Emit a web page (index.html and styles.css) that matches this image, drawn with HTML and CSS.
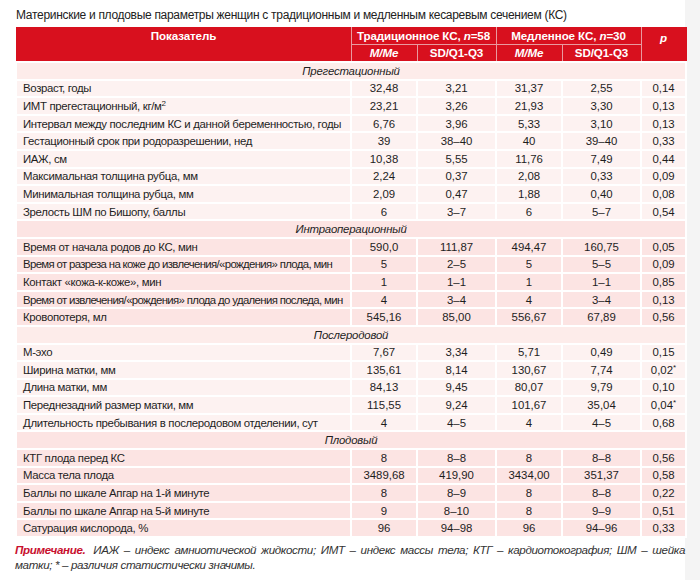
FILE: index.html
```html
<!DOCTYPE html>
<html lang="ru">
<head>
<meta charset="utf-8">
<title>Таблица</title>
<link rel="stylesheet" href="styles.css">
</head>
<body>
<div class="page">
  <div class="title">Материнские и плодовые параметры женщин с традиционным и медленным кесаревым сечением (КС)</div>
  <table class="tbl">
    <colgroup>
      <col class="c-name"><col class="c-m"><col class="c-sd"><col class="c-m"><col class="c-sd"><col class="c-p">
    </colgroup>
    <thead>
      <tr class="h1">
        <th rowspan="2" class="th-name">Показатель</th>
        <th colspan="2">Традиционное КС, <i>n</i>=58</th>
        <th colspan="2">Медленное КС, <i>n</i>=30</th>
        <th rowspan="2" class="th-p"><i>p</i></th>
      </tr>
      <tr class="h2">
        <th><i>M/Me</i></th><th>SD/Q1-Q3</th><th><i>M/Me</i></th><th>SD/Q1-Q3</th>
      </tr>
    </thead>
    <tbody class="sec light">
      <tr class="sh"><td colspan="6">Прегестационный</td></tr>
      <tr><td>Возраст, годы</td><td>32,48</td><td>3,21</td><td>31,37</td><td>2,55</td><td>0,14</td></tr>
      <tr><td>ИМТ прегестационный, кг/м<sup>2</sup></td><td>23,21</td><td>3,26</td><td>21,93</td><td>3,30</td><td>0,13</td></tr>
      <tr><td>Интервал между последним КС и данной беременностью, годы</td><td>6,76</td><td>3,96</td><td>5,33</td><td>3,10</td><td>0,13</td></tr>
      <tr><td>Гестационный срок при родоразрешении, нед</td><td>39</td><td>38–40</td><td>40</td><td>39–40</td><td>0,33</td></tr>
      <tr><td>ИАЖ, см</td><td>10,38</td><td>5,55</td><td>11,76</td><td>7,49</td><td>0,44</td></tr>
      <tr><td>Максимальная толщина рубца, мм</td><td>2,24</td><td>0,37</td><td>2,08</td><td>0,33</td><td>0,09</td></tr>
      <tr><td>Минимальная толщина рубца, мм</td><td>2,09</td><td>0,47</td><td>1,88</td><td>0,40</td><td>0,08</td></tr>
      <tr><td>Зрелость ШМ по Бишопу, баллы</td><td>6</td><td>3–7</td><td>6</td><td>5–7</td><td>0,54</td></tr>
    </tbody>
    <tbody class="sec pink">
      <tr class="sh"><td colspan="6">Интраоперационный</td></tr>
      <tr><td>Время от начала родов до КС, мин</td><td>590,0</td><td>111,87</td><td>494,47</td><td>160,75</td><td>0,05</td></tr>
      <tr><td class="tight">Время от разреза на коже до извлечения/«рождения» плода, мин</td><td>5</td><td>2–5</td><td>5</td><td>5–5</td><td>0,09</td></tr>
      <tr><td>Контакт «кожа-к-коже», мин</td><td>1</td><td>1–1</td><td>1</td><td>1–1</td><td>0,85</td></tr>
      <tr><td class="tight">Время от извлечения/«рождения» плода до удаления последа, мин</td><td>4</td><td>3–4</td><td>4</td><td>3–4</td><td>0,13</td></tr>
      <tr><td>Кровопотеря, мл</td><td>545,16</td><td>85,00</td><td>556,67</td><td>67,89</td><td>0,56</td></tr>
    </tbody>
    <tbody class="sec light">
      <tr class="sh"><td colspan="6">Послеродовой</td></tr>
      <tr><td>М-эхо</td><td>7,67</td><td>3,34</td><td>5,71</td><td>0,49</td><td>0,15</td></tr>
      <tr><td>Ширина матки, мм</td><td>135,61</td><td>8,14</td><td>130,67</td><td>7,74</td><td>0,02<sup>*</sup></td></tr>
      <tr><td>Длина матки, мм</td><td>84,13</td><td>9,45</td><td>80,07</td><td>9,79</td><td>0,10</td></tr>
      <tr><td>Переднезадний размер матки, мм</td><td>115,55</td><td>9,24</td><td>101,67</td><td>35,04</td><td>0,04<sup>*</sup></td></tr>
      <tr><td>Длительность пребывания в послеродовом отделении, сут</td><td>4</td><td>4–5</td><td>4</td><td>4–5</td><td>0,68</td></tr>
    </tbody>
    <tbody class="sec pink">
      <tr class="sh"><td colspan="6">Плодовый</td></tr>
      <tr><td>КТГ плода перед КС</td><td>8</td><td>8–8</td><td>8</td><td>8–8</td><td>0,56</td></tr>
      <tr><td>Масса тела плода</td><td>3489,68</td><td>419,90</td><td>3434,00</td><td>351,37</td><td>0,58</td></tr>
      <tr><td>Баллы по шкале Апгар на 1-й минуте</td><td>8</td><td>8–9</td><td>8</td><td>8–8</td><td>0,22</td></tr>
      <tr><td>Баллы по шкале Апгар на 5-й минуте</td><td>9</td><td>8–10</td><td>8</td><td>9–9</td><td>0,51</td></tr>
      <tr><td>Сатурация кислорода, %</td><td>96</td><td>94–98</td><td>96</td><td>94–96</td><td>0,33</td></tr>
    </tbody>
  </table>
  <p class="note"><b>Примечание.</b> <span>ИАЖ – индекс амниотической жидкости; ИМТ – индекс массы тела; КТГ – кардиотокография; ШМ – шейка</span> <span>матки; * – различия статистически значимы.</span></p>
</div>
</body>
</html>
```
FILE: styles.css
```css
html {
  background: #f4f4f4;
}
body {
  margin: 0;
  font-family: "Liberation Sans", Arial, sans-serif;
  color: #1e1e1e;
}
.page {
  width: 670px;
  padding: 8px 0 0 15px;
  height: 572px;
  background: #fff;
}
.title {
  font-size: 12px;
  letter-spacing: -0.3px;
  line-height: 15px;
  height: 19px;
  padding-left: 1px;
  color: #222;
}
.tbl {
  width: 670px;
  border-collapse: collapse;
  table-layout: fixed;
  font-size: 11.4px;
}
.c-name { width: 335px; }
.c-m { width: 66px; }
.c-sd { width: 79px; }
.c-p { width: 45px; }

thead th {
  background: #d8101e;
  color: #fff;
  font-weight: bold;
  border: 1px solid #e99a9f;
  padding: 0;
  vertical-align: top;
  font-size: 11.6px;
  line-height: 15px;
  letter-spacing: -0.1px;
}
thead tr.h1 th { height: 16px; border-top-color: #d8101e; }
thead tr.h2 th { height: 16px; border-bottom-color: #d8101e; }
thead .th-name { border-left-color: #d8101e; }
thead .th-p { border-right-color: #d8101e; padding-top: 2px; }
thead th i { font-style: italic; }

tbody td {
  border: 2px solid #fff;
  padding: 0;
  height: 15.6px;
  line-height: 14px;
  text-align: center;
  white-space: nowrap;
}
tbody td:first-child {
  text-align: left;
  padding-left: 6px;
  letter-spacing: -0.33px;
}
tbody td.tight {
  letter-spacing: -0.65px;
}
tbody tr.sh td {
  text-align: center;
  font-style: italic;
  padding-left: 0;
  letter-spacing: -0.2px;
}
.light td { background: #fdf2f1; }
.pink td { background: #fce4e3; }
.light tr.sh td { background: #fdecea; }
.pink tr.sh td { background: #fce4e3; }

sup {
  font-size: 8px;
  line-height: 0;
  vertical-align: 4px;
}
.note {
  margin: 4px 0 0 0;
  font-size: 11.6px;
  line-height: 15px;
  font-style: italic;
  text-align: justify;
  letter-spacing: -0.35px;
  color: #333;
}
.note b {
  color: #c8102e;
  font-weight: bold;
  margin-right: 3px;
}
```
